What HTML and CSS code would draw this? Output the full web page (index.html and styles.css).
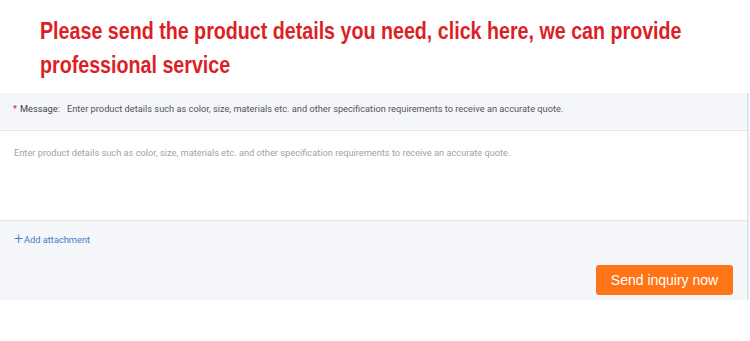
FILE: index.html
```html
<!DOCTYPE html>
<html lang="en">
<head>
<meta charset="UTF-8">
<meta name="viewport" content="width=device-width, initial-scale=1.0">
<title>Inquiry</title>
<link rel="stylesheet" href="styles.css">
</head>
<body>

<div class="headline">
    <h1>Please send the product details you need, click here, we can provide professional service</h1>
</div>

<div class="inquiry">
    <div class="message-row">
        <span class="req">*</span>
        <span class="label">Message:</span>
        <span class="hint">Enter product details such as color, size, materials etc. and other specification requirements to receive an accurate quote.</span>
    </div>
    <textarea class="message-box" placeholder="Enter product details such as color, size, materials etc. and other specification requirements to receive an accurate quote."></textarea>
    <div class="attach">
        <span class="plus">+</span>Add attachment
    </div>
    <div class="actions">
        <button class="send-btn">Send inquiry now</button>
    </div>
</div>

</body>
</html>
```

FILE: styles.css
```css
body {
    margin: 0;
    padding: 0;
    background-color: #fff;
    font-family: Roboto, "Liberation Sans", Arial, sans-serif;
    color: #333;
}

.headline {
    padding: 14px 0 0 40px;
    height: 79px;
}

.headline h1 {
    margin: 0;
    width: 790px;
    font-family: "Liberation Sans Narrow", "Arial Narrow", "Liberation Sans", Arial, sans-serif;
    font-weight: bold;
    font-size: 23px;
    line-height: 34px;
    color: #dc1f26;
    transform: scaleX(0.855);
    transform-origin: left top;
}

.inquiry {
    width: 747px;
    background-color: #f5f6fa;
    border-right: 2px solid #e1e6ee;
    height: 207px;
}

.message-row {
    height: 38px;
    display: flex;
    align-items: center;
    padding-left: 13px;
    font-size: 9.25px;
    border-bottom: 1px solid #e3e7ee;
    box-sizing: border-box;
    padding-bottom: 6px;
}

.req {
    color: #e02020;
    margin-right: 3px;
}

.label {
    color: #444;
    margin-right: 7px;
}

.hint {
    color: #555;
}

.message-box {
    display: block;
    width: 100%;
    height: 90px;
    margin: 0;
    box-sizing: border-box;
    border: none;
    border-bottom: 1px solid #dfe3ea;
    background-color: #fff;
    padding: 16px 14px;
    font-family: Roboto, "Liberation Sans", Arial, sans-serif;
    font-size: 9.25px;
    resize: none;
    outline: none;
}

.message-box::placeholder {
    color: #a2a2a2;
}

.attach {
    display: flex;
    align-items: center;
    padding: 10px 0 0 14px;
    height: 16px;
    font-size: 9.25px;
    color: #3d7cc9;
}

.plus {
    font-size: 16px;
    font-weight: 300;
    margin-right: 1px;
    line-height: 14px;
}

.actions {
    display: flex;
    justify-content: flex-end;
    padding: 18px 14px 0 0;
}

.send-btn {
    width: 137px;
    height: 30px;
    border: none;
    border-radius: 3px;
    background-color: #ff7417;
    color: #fff;
    font-family: "Liberation Sans", Arial, sans-serif;
    font-size: 14px;
    cursor: pointer;
}
```
